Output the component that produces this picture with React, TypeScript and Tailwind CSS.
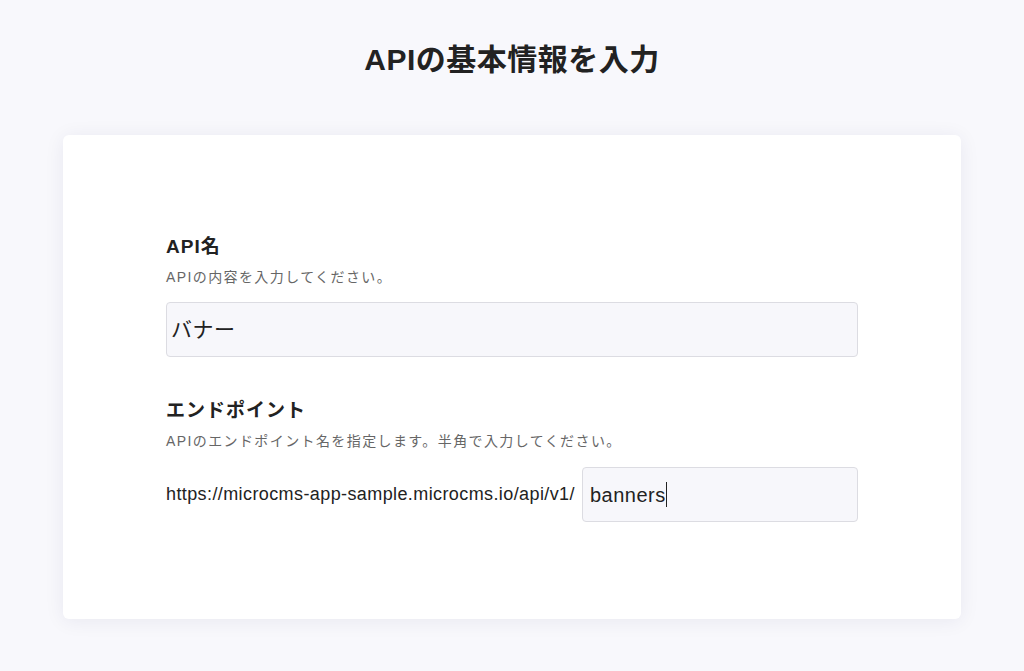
export default function App() {
  return (
    <div
      className="min-h-screen bg-[#f8f8fc] flex flex-col items-center text-[#222]"
      style={{ fontFamily: '"Liberation Sans", "Noto Sans CJK JP", sans-serif' }}
    >
      <h1 className="mt-[40px] text-[30px] font-bold leading-[40px] tracking-[0.5px] text-[#222]">
        APIの基本情報を入力
      </h1>
      <div className="mt-[55px] w-[898px] rounded-md bg-white shadow-[0_2px_20px_rgba(30,30,80,0.07)] px-[103px] pt-[99px] pb-[97px]">
        <div className="flex flex-col">
          <label className="text-[19px] font-bold leading-[26px] tracking-[1px]">API名</label>
          <p className="mt-[7px] text-[14px] leading-[20px] tracking-[1.4px] text-[#666]">APIの内容を入力してください。</p>
          <div className="mt-[15px] h-[55px] rounded-[4px] border border-[#dcdce2] bg-[#f7f7fb] flex items-center px-[4px] text-[21px] tracking-[0.5px]">
            バナー
          </div>
        </div>
        <div className="mt-[41px] flex flex-col">
          <label className="text-[19px] font-bold leading-[26px] tracking-[1px]">エンドポイント</label>
          <p className="mt-[7px] text-[14px] leading-[20px] tracking-[1.4px] text-[#666]">
            APIのエンドポイント名を指定します。半角で入力してください。
          </p>
          <div className="mt-[16px] flex items-center gap-[7px]">
            <span className="text-[18px] tracking-[0.4px] text-[#222]">https://microcms-app-sample.microcms.io/api/v1/</span>
            <div className="flex-1 h-[55px] rounded-[4px] border border-[#dcdce2] bg-[#f7f7fb] flex items-center px-[7px] text-[20px] tracking-[0.5px]">
              banners
              <span className="inline-block w-[1px] h-[25px] bg-[#222]" />
            </div>
          </div>
        </div>
      </div>
    </div>
  );
}
